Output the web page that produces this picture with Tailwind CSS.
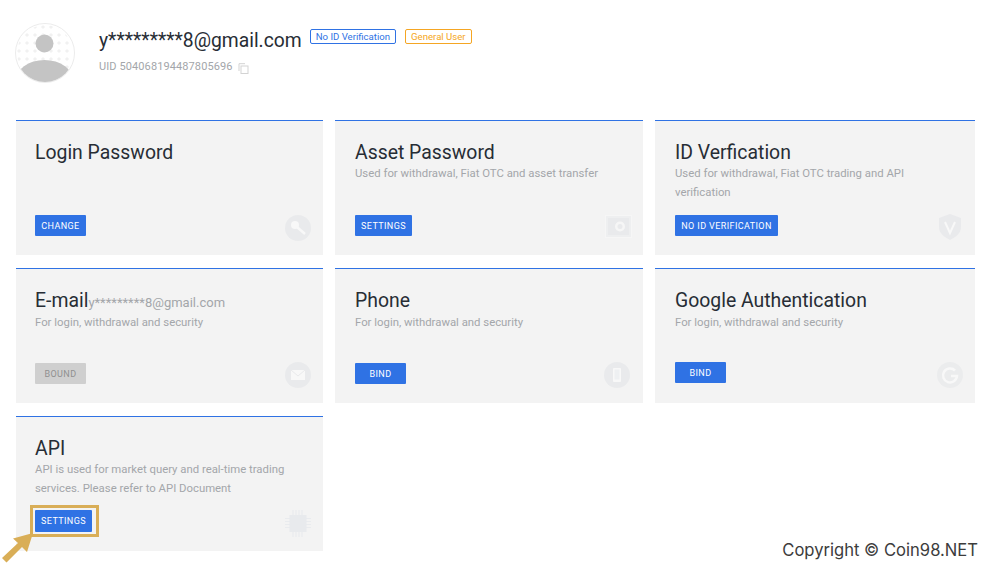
<!DOCTYPE html>
<html lang="en">
<head>
  <meta charset="UTF-8" />
  <title>Account security</title>
  <script src="https://cdn.jsdelivr.net/npm/@tailwindcss/browser@4"></script>
</head>
<body class="bg-white w-[990px] h-[568px] overflow-hidden relative font-[Roboto,sans-serif]">
  <!-- Profile header -->
  <div class="flex h-[120px] pl-[15px] pt-[23px]">
    <svg class="w-[60px] h-[60px] shrink-0" viewBox="0 0 60 60">
      <defs>
        <clipPath id="avatar-clip"><circle cx="30" cy="30" r="29"/></clipPath>
        <pattern id="avatar-dots" width="8" height="8" patternUnits="userSpaceOnUse"><rect x="2.500" y="2.500" width="3" height="3" transform="rotate(45 4 4)" fill="#f1f1f1"/></pattern>
      </defs>
      <circle cx="30" cy="30" r="29.500" fill="#fff" stroke="#ececec"/>
      <circle cx="30" cy="30" r="28" fill="url(#avatar-dots)"/>
      <circle cx="29.500" cy="20.500" r="9" fill="#c4c4c4"/>
      <ellipse cx="29.500" cy="58" rx="29" ry="21" fill="#c4c4c4" clip-path="url(#avatar-clip)"/>
    </svg>
    <div class="ml-[24px]">
      <div class="flex items-start">
        <span class="text-[19.3px] leading-[35px] text-[#272d35]">y*********8@gmail.com</span>
        <span class="ml-[8px] mt-[6px] h-[15px] px-[5px] border border-[#2f72e4] rounded-[2px] text-[9.6px] leading-[13px] text-[#2f72e4]">No ID Verification</span>
        <span class="ml-[9px] mt-[6px] h-[15px] px-[5px] border border-[#f5a623] rounded-[2px] text-[9.6px] leading-[13px] text-[#f5a623]">General User</span>
      </div>
      <div class="flex items-center mt-[2px] text-[11px] leading-[14px] text-[#a3a6aa] tracking-[0.1px]">
        UID 504068194487805696
        <svg class="ml-[5px] mt-[2px] w-[11px] h-[11px]" viewBox="0 0 11 11" fill="none" stroke="#d3d3d3"><path d="M1 8V.7h6"/><rect x="3" y="3" width="7" height="7.500"/></svg>
      </div>
    </div>
  </div>

  <!-- Cards -->
  <div class="grid grid-cols-[307px_308px_320px] auto-rows-[135px] gap-x-[12px] gap-y-[13px] pl-[16px]">
    <div class="relative bg-[#f3f3f3] border-t border-[#2f72e4] pl-[19px] pt-[20px]">
      <h2 class="text-[19.4px] leading-[24px] text-[#272d35]">Login Password</h2>
      <button class="absolute left-[19px] top-[94px] h-[21px] w-[51px] pt-[2px] bg-[#2f72e4] rounded-[1px] text-white text-[9px] tracking-[0.4px]">CHANGE</button>
      <svg class="absolute right-[12px] bottom-[14px] w-[26px] h-[26px]" viewBox="0 0 26 26"><circle cx="13" cy="13" r="13" fill="#e9eaec"/><circle cx="10" cy="10" r="4" fill="#f8f8f8"/><path d="M12 12l8 7" stroke="#f8f8f8" stroke-width="2.500"/></svg>
    </div>
    <div class="relative bg-[#f3f3f3] border-t border-[#2f72e4] pl-[20px] pt-[20px]">
      <h2 class="text-[19.4px] leading-[24px] text-[#272d35]">Asset Password</h2>
      <p class="-mt-[1px] text-[11.35px] leading-[19px] text-[#a3a6aa]">Used for withdrawal, Fiat OTC and asset transfer</p>
      <button class="absolute left-[20px] top-[94px] h-[21px] w-[57px] pt-[2px] bg-[#2f72e4] rounded-[1px] text-white text-[9px] tracking-[0.4px]">SETTINGS</button>
      <svg class="absolute right-[11px] bottom-[16px] w-[27px] h-[24px]" viewBox="0 0 27 24"><rect x=".5" y=".5" width="26" height="22" fill="#eeeff0" stroke="#f6f6f6"/><rect x="3" y="3" width="21" height="17" fill="#e9eaec"/><circle cx="15" cy="11.500" r="5" fill="#f6f6f6"/><circle cx="15" cy="11.500" r="2.500" fill="#e9eaec"/></svg>
    </div>
    <div class="relative bg-[#f3f3f3] border-t border-[#2f72e4] pl-[20px] pt-[20px]">
      <h2 class="text-[19.4px] leading-[24px] text-[#272d35]">ID Verfication</h2>
      <p class="-mt-[1px] text-[11.35px] leading-[19px] text-[#a3a6aa] w-[250px]">Used for withdrawal, Fiat OTC trading and API verification</p>
      <button class="absolute left-[20px] top-[94px] h-[21px] w-[103px] pt-[2px] bg-[#2f72e4] rounded-[1px] text-white text-[9px] tracking-[0.4px]">NO ID VERIFICATION</button>
      <svg class="absolute right-[13px] bottom-[15px] w-[24px] h-[26px]" viewBox="0 0 24 26"><path d="M12 0l11 4v9c0 6-5 10-11 13C6 23 1 19 1 13V4z" fill="#e9eaec"/><path d="M7 8l5 11 5-11" fill="none" stroke="#f8f8f8" stroke-width="2"/></svg>
    </div>

    <div class="relative bg-[#f3f3f3] border-t border-[#2f72e4] pl-[19px] pt-[20px]">
      <h2 class="h-[24px] text-[19.4px] leading-[24px] text-[#272d35]">E-mail<span class="text-[13px] text-[#a3a6aa]">y*********8@gmail.com</span></h2>
      <p class="text-[11.35px] leading-[19px] text-[#a3a6aa]">For login, withdrawal and security</p>
      <button class="absolute left-[19px] top-[94px] h-[21px] w-[51px] pt-[2px] bg-[#cfcfcf] rounded-[1px] text-[#8f8f8f] text-[9px] tracking-[0.4px]">BOUND</button>
      <svg class="absolute right-[12px] bottom-[15px] w-[26px] h-[26px]" viewBox="0 0 26 26"><circle cx="13" cy="13" r="13" fill="#e9eaec"/><rect x="6" y="8" width="14" height="10" fill="#f8f8f8"/><path d="M6 8l7 6 7-6" fill="none" stroke="#e9eaec"/></svg>
    </div>
    <div class="relative bg-[#f3f3f3] border-t border-[#2f72e4] pl-[20px] pt-[20px]">
      <h2 class="text-[19.4px] leading-[24px] text-[#272d35]">Phone</h2>
      <p class="text-[11.35px] leading-[19px] text-[#a3a6aa]">For login, withdrawal and security</p>
      <button class="absolute left-[20px] top-[94px] h-[21px] w-[51px] pt-[2px] bg-[#2f72e4] rounded-[1px] text-white text-[9px] tracking-[0.4px]">BIND</button>
      <svg class="absolute right-[13px] bottom-[15px] w-[26px] h-[26px]" viewBox="0 0 26 26"><circle cx="13" cy="13" r="13" fill="#e9eaec"/><rect x="9" y="6" width="8" height="14" rx="1" fill="#f8f8f8"/><rect x="10.500" y="7.500" width="5" height="10" fill="#eef0f2"/></svg>
    </div>
    <div class="relative bg-[#f3f3f3] border-t border-[#2f72e4] pl-[20px] pt-[20px]">
      <h2 class="text-[19.4px] leading-[24px] text-[#272d35]">Google Authentication</h2>
      <p class="text-[11.35px] leading-[19px] text-[#a3a6aa]">For login, withdrawal and security</p>
      <button class="absolute left-[20px] top-[93px] h-[21px] w-[51px] pt-[2px] bg-[#2f72e4] rounded-[1px] text-white text-[9px] tracking-[0.4px]">BIND</button>
      <svg class="absolute right-[12px] bottom-[15px] w-[26px] h-[26px]" viewBox="0 0 26 26"><circle cx="13" cy="13" r="13" fill="#ebeced"/><path d="M18 8.500A7 7 0 1 0 20 14h-6" fill="none" stroke="#f8f8f8" stroke-width="2.500"/></svg>
    </div>

    <div class="relative bg-[#f3f3f3] border-t border-[#2f72e4] pl-[19px] pt-[20px]">
      <h2 class="text-[19.4px] leading-[24px] text-[#272d35]">API</h2>
      <p class="-mt-[1px] text-[11.35px] leading-[19px] text-[#a3a6aa] w-[262px]">API is used for market query and real-time trading services. Please refer to API Document</p>
      <button class="absolute left-[19px] top-[93px] h-[22px] w-[57px] pt-[2px] bg-[#2f72e4] rounded-[1px] text-white text-[9px] tracking-[0.4px]">SETTINGS</button>
      <svg class="absolute right-[12px] bottom-[14px] w-[26px] h-[27px]" viewBox="0 0 26 27"><path d="M8 0v27M11 0v27M14 0v27M17 0v27M0 8.500h26M0 11.500h26M0 14.500h26M0 17.500h26" stroke="#e9ebee" stroke-width="1.200"/><rect x="4.500" y="5" width="17" height="17" fill="#e8eaed"/></svg>
    </div>
  </div>

  <!-- Annotation over the API button -->
  <div class="absolute left-[30px] top-[505px] w-[69px] h-[32px] border-[3px] border-[#d9ae57]"></div>
  <svg class="absolute left-0 top-[530px] w-[36px] h-[36px]" viewBox="0 0 36 36"><path d="M33 3L13 8.500l5 4.500L2 28l4.500 4.500L22 17l5 5z" fill="#d9ae57"/></svg>

  <div class="absolute right-[12px] top-[540px] font-['Inter',sans-serif] text-[16.6px] leading-[20px] text-[#3c3c3c]">Copyright © Coin98.NET</div>
</body>
</html>
